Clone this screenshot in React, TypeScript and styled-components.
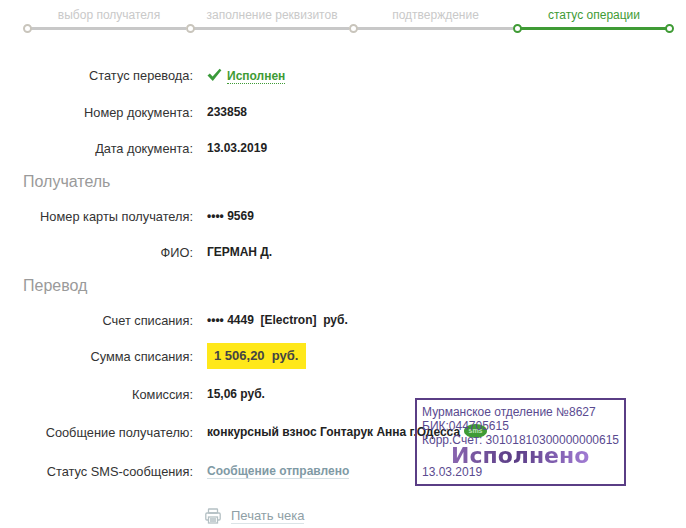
import React from "react";
import styled, { createGlobalStyle } from "styled-components";

const Global = createGlobalStyle`
  html, body { margin: 0; padding: 0; background: #fff; }
  body { font-family: "Liberation Sans", Arial, sans-serif; font-size: 12px; color: #222; }
`;

const Page = styled.div`
  position: relative;
  width: 686px;
  height: 528px;
  overflow: hidden;
  box-sizing: border-box;
  padding: 8px 11px 0 23px;
`;

const Stepper = styled.div`
  display: grid;
  grid-template-columns: 163px 163px 164px 162px;
  margin-bottom: 24px;
`;

const Step = styled.div<{ $active?: boolean }>`
  position: relative;
  height: 25px;
  box-sizing: border-box;
  padding-left: ${(p) => (p.$active ? 0 : 9)}px;
  text-align: center;
  font-size: 12px;
  line-height: 14px;
  color: ${(p) => (p.$active ? "#3f9b35" : "#c9c9c9")};

  &::before {
    content: "";
    position: absolute;
    left: 4px;
    right: ${(p) => (p.$active ? 4 : 0)}px;
    top: 19px;
    height: 3px;
    background: ${(p) => (p.$active ? "#3f9b35" : "#c8c8c8")};
  }
`;

const Dot = styled.span<{ $active?: boolean; $end?: boolean }>`
  position: absolute;
  top: 16px;
  ${(p) => (p.$end ? "right: 1px;" : "left: 0;")}
  width: 9px;
  height: 9px;
  box-sizing: border-box;
  border-radius: 50%;
  background: #fff;
  border: 2px solid ${(p) => (p.$active ? "#3f9b35" : "#c9c5bc")};
`;

const Row = styled.div<{ $h?: number }>`
  display: grid;
  grid-template-columns: 170px 1fr;
  column-gap: 14px;
  align-items: center;
  height: ${(p) => p.$h ?? 36}px;
`;

const Label = styled.div`
  text-align: right;
  font-size: 12.8px;
  color: #333;
  white-space: nowrap;
`;

const Value = styled.div`
  font-weight: bold;
  color: #222;
  white-space: nowrap;
  display: flex;
  align-items: center;
`;

const Heading = styled.div<{ $top: number }>`
  font-size: 16px;
  line-height: 20px;
  color: #9a9a9a;
  margin: ${(p) => p.$top}px 0 6px;
`;

const StatusLink = styled.span`
  color: #3f9b35;
  font-weight: bold;
  border-bottom: 1px dotted #3f9b35;
  margin-left: 5px;
  line-height: 14px;
  padding-top: 2px;
`;

const Highlight = styled.span`
  background: #ffe81a;
  color: #444;
  font-size: 13px;
  padding: 0 8px 0 7px;
  height: 26px;
  line-height: 26px;
  white-space: pre;
`;

const SmsLink = styled.span`
  color: #7f9aa5;
  font-weight: bold;
  border-bottom: 1px solid #d5e0e4;
  line-height: 14px;
`;

const SmsBadge = styled.span`
  position: absolute;
  left: 464px;
  top: 424px;
  width: 23px;
  height: 14px;
  border-radius: 50%;
  background: #3f9b35;
  color: #bfe3b8;
  font-size: 7px;
  line-height: 14px;
  text-align: center;
  font-weight: bold;
`;

const PrintRow = styled.div`
  display: flex;
  align-items: center;
  gap: 10px;
  margin: 16px 0 0 182px;
`;

const PrintLink = styled.span`
  color: #8fa0a6;
  font-size: 13px;
  border-bottom: 1px solid #dbe4e7;
  line-height: 15px;
`;

const Stamp = styled.div`
  position: absolute;
  left: 415px;
  top: 398px;
  width: 211px;
  height: 88px;
  box-sizing: border-box;
  border: 2px solid #5a3d85;
  padding: 5px 0 0 5px;
  color: #5a4a90;
  font-size: 12px;
  line-height: 14px;
  white-space: nowrap;
`;

const StampTitle = styled.div`
  font-family: "DejaVu Sans", sans-serif;
  font-size: 22px;
  line-height: 24px;
  font-weight: bold;
  margin: -3px 0 0 29px;
  background: linear-gradient(90deg, #8a66b0 0%, #5a3d85 45%, #a57fd8 100%);
  -webkit-background-clip: text;
  background-clip: text;
  color: transparent;
  width: 142px;
`;

const StampDate = styled.div`
  margin-top: -3px;
`;

const steps = ["выбор получателя", "заполнение реквизитов", "подтверждение", "статус операции"];

export default function App() {
  return (
    <Page>
      <Global />
      <Stepper>
        {steps.map((s, i) => (
          <Step key={s} $active={i === 3}>
            {s}
            <Dot $active={i === 3} />
            {i === 3 && <Dot $active $end />}
          </Step>
        ))}
      </Stepper>

      <Row>
        <Label>Статус перевода:</Label>
        <Value>
          <svg width="15" height="14" viewBox="0 0 15 14">
            <path d="M0.5 7.5 L2.8 5.6 L5.6 8.6 L12.6 0.8 L14.4 2.2 L5.8 13 Z" fill="#3a9a3a" />
          </svg>
          <StatusLink>Исполнен</StatusLink>
        </Value>
      </Row>
      <Row $h={38}>
        <Label>Номер документа:</Label>
        <Value>233858</Value>
      </Row>
      <Row $h={34}>
        <Label>Дата документа:</Label>
        <Value>13.03.2019</Value>
      </Row>

      <Heading $top={7}>Получатель</Heading>
      <Row>
        <Label>Номер карты получателя:</Label>
        <Value>•••• 9569</Value>
      </Row>
      <Row>
        <Label>ФИО:</Label>
        <Value>ГЕРМАН Д.</Value>
      </Row>

      <Heading $top={6}>Перевод</Heading>
      <Row>
        <Label>Счет списания:</Label>
        <Value>{"•••• 4449\u00a0\u00a0[Electron]\u00a0\u00a0руб."}</Value>
      </Row>
      <Row>
        <Label>Сумма списания:</Label>
        <Value>
          <Highlight>{"1 506,20\u00a0\u00a0руб."}</Highlight>
        </Value>
      </Row>
      <Row $h={40}>
        <Label>Комиссия:</Label>
        <Value>15,06 руб.</Value>
      </Row>
      <Row>
        <Label>Сообщение получателю:</Label>
        <Value>конкурсный взнос Гонтарук Анна г.Одесса</Value>
      </Row>
      <Row $h={42}>
        <Label>Статус SMS-сообщения:</Label>
        <Value>
          <SmsLink>Сообщение отправлено</SmsLink>
        </Value>
      </Row>

      <PrintRow>
        <svg width="16" height="16" viewBox="0 0 16 16" fill="none" stroke="#b4c0c4" strokeWidth="1.3">
          <rect x="3.5" y="1" width="9" height="4" rx="0.5" />
          <path d="M3.5 12 H2 Q0.8 12 0.8 10.8 V6.2 Q0.8 5 2 5 H14 Q15.2 5 15.2 6.2 V10.8 Q15.2 12 14 12 H12.5" />
          <rect x="3.5" y="9" width="9" height="6" />
          <path d="M5 11 H11 M5 13 H11" />
        </svg>
        <PrintLink>Печать чека</PrintLink>
      </PrintRow>

      <SmsBadge>sms</SmsBadge>
      <Stamp>
        <div>Мурманское отделение №8627</div>
        <div>БИК:044705615</div>
        <div>Корр.Счет: 30101810300000000615</div>
        <StampTitle>Исполнено</StampTitle>
        <StampDate>13.03.2019</StampDate>
      </Stamp>
    </Page>
  );
}
